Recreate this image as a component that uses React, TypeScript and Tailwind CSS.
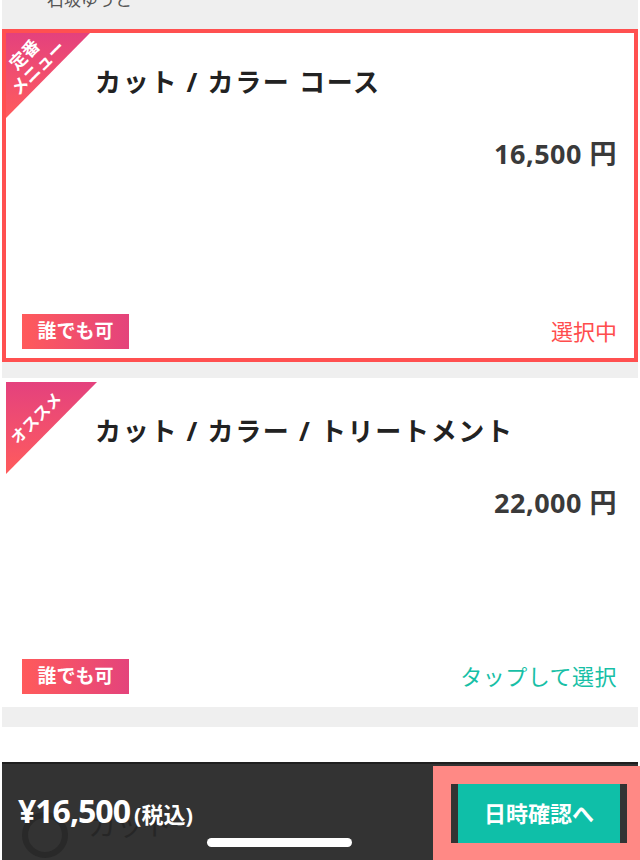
import React from "react";

interface MenuCardProps {
  title: string;
  price: string;
  ribbon: React.ReactNode;
  selected?: boolean;
  height: string;
}

const Ribbon: React.FC<{ children: React.ReactNode; big?: boolean }> = ({
  children,
  big,
}) => (
  <div
    className={`absolute top-0 left-0 ${
      big ? "w-[91px] h-[92px]" : "w-[84px] h-[85px]"
    } bg-linear-to-b from-[#e4417d] to-[#ff5b5b] [clip-path:polygon(0_0,100%_0,0_100%)]`}
  >
    {children}
  </div>
);

const MenuCard: React.FC<MenuCardProps> = ({
  title,
  price,
  ribbon,
  selected = false,
  height,
}) => {
  return (
    <div
      className={`relative flex flex-col bg-white ${height} ${
        selected ? "border-4 border-[#ff5050]" : "border-4 border-transparent"
      }`}
    >
      {ribbon}

      {/* Title */}
      <h2 className="pt-[31px] pl-[89px] text-[26px] leading-[36px] font-bold tracking-[0.065em] text-[#222]">
        {title}
      </h2>

      {/* Price */}
      <div className="mt-[37px] pr-[17px] text-right text-[27px] leading-[34px] font-bold tracking-[0.5px] text-[#3a3a3a]">
        {price}
      </div>

      {/* Bottom row */}
      <div className="mt-auto mb-[9px] flex items-center justify-between pl-[16px] pr-[17px]">
        <span className="flex h-[35px] w-[107px] items-center justify-center bg-linear-to-r from-[#ff5a5a] to-[#e4437b] text-[19px] font-bold text-white">
          誰でも可
        </span>
        {selected ? (
          <span className="text-[22px] text-[#ff4d4d]">選択中</span>
        ) : (
          <span className="text-[22px] tracking-[0.5px] text-[#17bfa6]">
            タップして選択
          </span>
        )}
      </div>
    </div>
  );
};

export default function App() {
  return (
    <div className="relative flex h-[860px] w-[640px] flex-col overflow-hidden bg-white font-['Noto_Sans','Noto_Sans_CJK_JP',sans-serif]">
      <div className="mx-[2px] bg-[#efefef]">
        {/* Stylist name, scrolled off the top */}
        <div className="h-[29px] overflow-hidden pl-[45px]">
          <p className="-mt-[9px] text-[17px] leading-none text-[#555]">
            石坂ゆうと
          </p>
        </div>

        <MenuCard
          selected
          height="h-[333px]"
          title="カット / カラー コース"
          price="16,500 円"
          ribbon={
            <Ribbon>
              <div className="absolute left-[25px] top-[28px] -translate-x-1/2 -translate-y-1/2 -rotate-45 text-center text-[17px] leading-[19px] font-bold text-white whitespace-nowrap">
                定番
                <br />
                メニュー
              </div>
            </Ribbon>
          }
        />

        <div className="h-[16px]" />

        <MenuCard
          height="h-[329px]"
          title="カット / カラー / トリートメント"
          price="22,000 円"
          ribbon={
            <Ribbon big>
              <div className="absolute left-[30px] top-[36px] -translate-x-1/2 -translate-y-1/2 -rotate-45 text-[16px] leading-none font-bold text-white whitespace-nowrap">
                オススメ
              </div>
            </Ribbon>
          }
        />

        <div className="h-[20px]" />
      </div>

      <div className="h-[36px]" />

      {/* Footer bar */}
      <div className="relative h-[98px] shrink-0">
        <div className="relative mx-[2px] flex h-full items-center overflow-hidden border-t-2 border-[#1f1f1f] bg-[#333333] pl-[16px]">
          {/* content scrolling under the bar */}
          <div className="absolute left-[20px] top-[48px] h-[46px] w-[46px] rounded-full border-[6px] border-[#292929]" />
          <div className="absolute left-[86px] top-[40px] text-[28px] text-[#262626]">
            カット
          </div>

          <div className="relative -mt-[2px] flex items-baseline text-white">
            <span className="text-[32px] font-bold tracking-[-1px]">
              ¥16,500
            </span>
            <span className="ml-[4px] text-[22px] font-bold">(税込)</span>
          </div>
        </div>

        {/* highlighted action */}
        <div className="absolute right-0 top-[4px] bottom-0 w-[207px] bg-[#ff8985] pt-[18px] pl-[18px]">
          <button className="flex h-[59px] w-[176px] items-center justify-center border-x-[7px] border-[#333] bg-[#0fbfa8] text-[22px] font-bold text-white">
            日時確認へ
          </button>
        </div>

        {/* home indicator */}
        <div className="absolute left-[207px] top-[76px] h-[9px] w-[145px] rounded-full bg-white" />
      </div>
    </div>
  );
}
